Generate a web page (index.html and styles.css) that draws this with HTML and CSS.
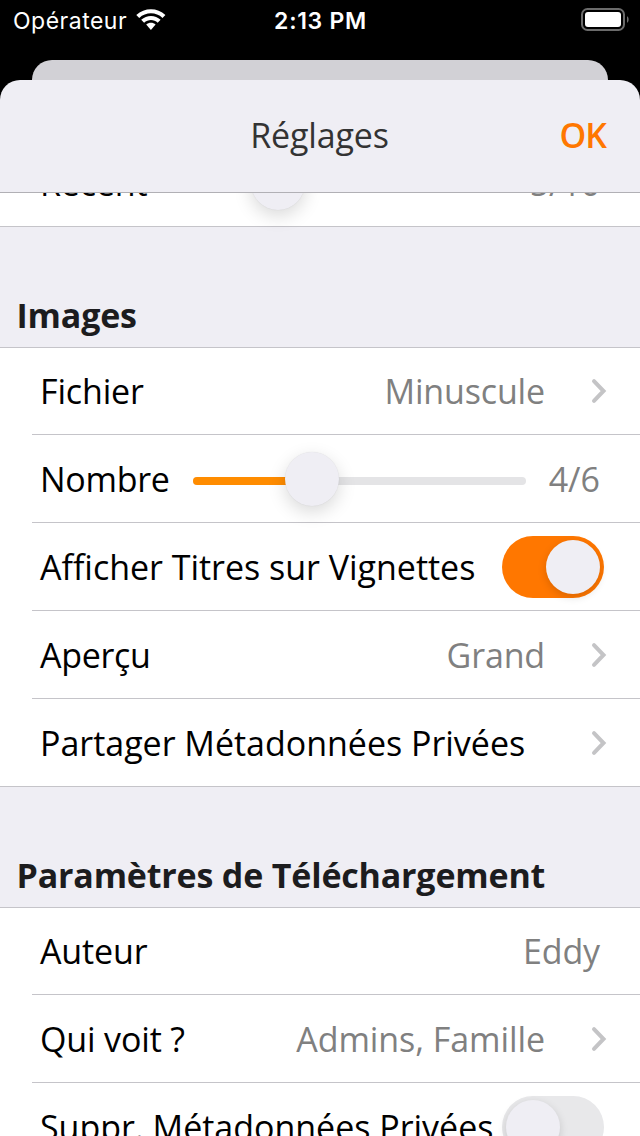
FILE: index.html
```html
<!DOCTYPE html>
<html lang="fr">
<head>
<meta charset="utf-8">
<title>Réglages</title>
<link rel="stylesheet" href="styles.css">
</head>
<body>
<div class="screen">
  <header class="status">
    <div class="carrier">
      <span class="carrier-name">Opérateur</span>
      <svg class="wifi" width="30" height="23" viewBox="0 0 30 23">
        <path d="M.3 7.100C8.500-.8 21.500-.8 29.400 7.100L26.500 10C20.100 3.800 9.900 3.800 3.200 10Z"/>
        <path d="M5.200 11.800C10.700 6.700 19.300 6.700 24.600 11.800L21.700 14.700C18 11.200 12 11.200 8.100 14.700Z"/>
        <path d="M10.200 16.600C12.900 14.200 17.100 14.200 19.600 16.600L14.900 21.900Z"/>
      </svg>
    </div>
    <span class="time">2:13 PM</span>
    <svg class="battery" width="50" height="24" viewBox="0 0 50 24">
      <rect class="battery-case" x="2" y="1" width="42" height="21" rx="5.500"/>
      <rect x="5" y="4" width="36" height="15" rx="3"/>
      <path class="battery-cap" d="M47 8.200C49.200 9.300 49.200 13.700 47 14.800Z"/>
    </svg>
  </header>
  <div class="back-card"></div>
  <main class="sheet">
    <nav class="navbar">
      <h1 class="title">Réglages</h1>
      <button class="ok">OK</button>
    </nav>
    <div class="content">
      <section class="list list-scrolled">
        <div class="row">
          <span class="label recent">Récent</span>
          <span class="slider"><span class="fill fill-recent"></span><span class="knob knob-recent"></span></span>
          <span class="value">5/10</span>
        </div>
      </section>
      <h2 class="section-title">Images</h2>
      <section class="list">
        <div class="row top-row">
          <span class="label">Fichier</span><span class="value">Minuscule</span>
          <svg class="chevron" width="16" height="26" viewBox="0 0 16 26"><path d="M3 3.200L12.500 13L3 22.800"/></svg>
        </div>
        <div class="row">
          <span class="label nombre">Nombre</span>
          <span class="slider"><span class="fill"></span><span class="knob"></span></span>
          <span class="value count">4/6</span>
        </div>
        <div class="row">
          <span class="label long">Afficher Titres sur Vignettes</span>
          <span class="switch on"><span class="thumb"></span></span>
        </div>
        <div class="row">
          <span class="label short">Aperçu</span><span class="value">Grand</span>
          <svg class="chevron" width="16" height="26" viewBox="0 0 16 26"><path d="M3 3.200L12.500 13L3 22.800"/></svg>
        </div>
        <div class="row">
          <span class="label long">Partager Métadonnées Privées</span>
          <svg class="chevron" width="16" height="26" viewBox="0 0 16 26"><path d="M3 3.200L12.500 13L3 22.800"/></svg>
        </div>
      </section>
      <h2 class="section-title">Paramètres de Téléchargement</h2>
      <section class="list">
        <div class="row top-row">
          <span class="label">Auteur</span><span class="value">Eddy</span>
        </div>
        <div class="row">
          <span class="label">Qui voit ?</span><span class="value wide">Admins, Famille</span>
          <svg class="chevron" width="16" height="26" viewBox="0 0 16 26"><path d="M3 3.200L12.500 13L3 22.800"/></svg>
        </div>
        <div class="row">
          <span class="label long">Suppr. Métadonnées Privées</span>
          <span class="switch"><span class="thumb"></span></span>
        </div>
      </section>
    </div>
  </main>
</div>
</body>
</html>
```
FILE: styles.css
```css
* { box-sizing: border-box; }
body { margin: 0; background: #000; }
.screen {
  display: flex;
  flex-direction: column;
  width: 640px;
  height: 1136px;
  overflow: hidden;
  background: #000;
  font-family: "Open Sans", "Noto Sans", sans-serif;
  font-size: 34px;
  line-height: 46px;
}
.status {
  display: grid;
  grid-template-columns: 1fr auto 1fr;
  align-items: center;
  height: 40px;
  margin-bottom: 20px;
  padding: 1px 10px 0 13px;
  color: #fff;
  font-family: Inter, "Liberation Sans", sans-serif;
  font-size: 23px;
  line-height: 28px;
}
.carrier { display: flex; align-items: center; gap: 8px; }
.carrier-name { width: 115px; letter-spacing: 0.5px; }
.wifi, .battery { display: block; fill: #fff; }
.wifi { margin-bottom: 2px; }
.time { margin-right: 2px; font-weight: 600; letter-spacing: 0.7px; }
.battery { justify-self: end; margin-bottom: 1px; }
.battery .battery-case { fill: none; stroke: #6b6b6b; stroke-width: 2; }
.battery .battery-cap { fill: #6b6b6b; }
.back-card {
  flex: none;
  height: 20px;
  margin: 0 32px;
  border-radius: 20px 20px 0 0;
  background: #d2d1d6;
}
.sheet {
  display: flex;
  flex-direction: column;
  flex: 1;
  min-height: 0;
  overflow: hidden;
  border-radius: 20px 20px 0 0;
  background: #efeef4;
}
.navbar {
  display: grid;
  grid-template-columns: 1fr auto 1fr;
  align-items: center;
  flex: none;
  height: 113px;
  padding: 0 34px 2px;
  border-bottom: 1px solid #b1b0b5;
}
.title {
  grid-column: 2;
  margin: 0 1px 0 0;
  color: #333;
  font-size: 34px;
  font-weight: 400;
  letter-spacing: -0.15px;
}
.ok {
  justify-self: end;
  padding: 0;
  border: 0;
  background: none;
  color: #ff7700;
  font: 600 34px/46px "Open Sans", sans-serif;
  letter-spacing: -1px;
}
.content { flex: 1; min-height: 0; overflow: hidden; }
.list { background: #fff; border-top: 1px solid #c5c4c9; border-bottom: 1px solid #c5c4c9; }
.list-scrolled { margin-top: -55px; }
.row {
  display: flex;
  align-items: center;
  height: 88px;
  margin-left: 32px;
  padding: 0 34px 0 8px;
  border-bottom: 1px solid #c5c4c9;
  white-space: nowrap;
}
.list .row:first-child { height: 87px; }
.list .row:last-child { border-bottom: 0; height: 87px; }
.label { padding-top: 1px; color: #000; letter-spacing: -0.15px; }
.long { letter-spacing: -0.02px; }
.short { letter-spacing: -0.3px; }
.value {
  margin-left: auto;
  padding: 1px 6px 0 0;
  color: #808080;
  letter-spacing: -0.15px;
}
.count { letter-spacing: 0; }
.wide { letter-spacing: -0.07px; }
.chevron {
  flex: none;
  margin: 1px -1px 0 auto;
  fill: none;
  stroke: #c4c4c6;
  stroke-width: 4;
  stroke-linecap: round;
  stroke-linejoin: miter;
}
.value + .chevron { margin-left: 40px; }
.top-row .label, .top-row .value { padding-top: 0; }
.top-row .chevron { margin-top: 0; }
.section-title {
  height: 120px;
  margin: 0;
  padding: 65px 16px 0 16.5px;
  color: #1c1c1e;
  font-size: 34px;
  font-weight: 700;
  letter-spacing: -0.18px;
}
.nombre, .recent { width: 153px; }
.nombre { letter-spacing: -0.3px; }
.slider {
  position: relative;
  width: 333px;
  height: 8px;
  margin-top: 4px;
  border-radius: 4px;
  background: #e4e4e6;
}
.fill { display: block; width: 119px; height: 8px; border-radius: 4px; background: #ff8c00; }
.fill-recent { width: 85px; }
.knob {
  position: absolute;
  left: 92px;
  top: -25px;
  width: 54px;
  height: 54px;
  border-radius: 50%;
  background: #efeef4;
  box-shadow: 0 0 1px rgba(0, 0, 0, .12), 0 6px 18px rgba(0, 0, 0, .15);
}
.knob-recent { left: 58px; }
.switch {
  display: flex;
  flex: none;
  width: 102px;
  height: 62px;
  margin: 1px 2px 0 auto;
  padding: 4px;
  border-radius: 31px;
  background: #e8e8ea;
}
.on { justify-content: flex-end; background: #ff7700; }
.thumb {
  width: 54px;
  height: 54px;
  border-radius: 50%;
  background: #efeef4;
  box-shadow: 0 3px 9px rgba(0, 0, 0, .15);
}
```
